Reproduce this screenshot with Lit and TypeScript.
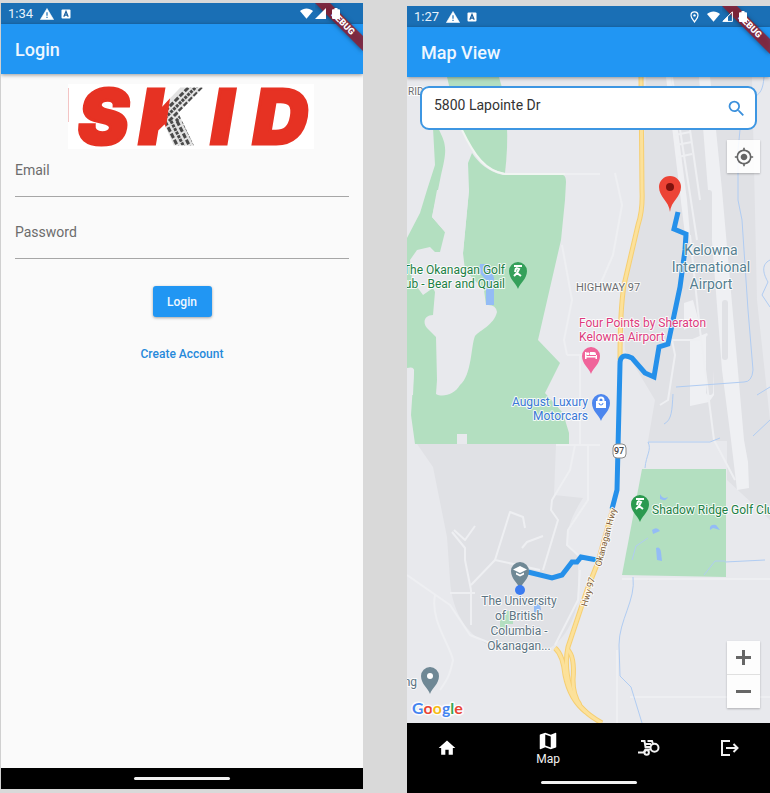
import { LitElement, html, css, svg, nothing } from "lit";
import { customElement, property } from "lit/decorators.js";

/* ---------- shared icon shapes ---------- */

const PIN = "M0 18C-2 12-9 8-9 0A9 9 0 0 1 9 0C9 8 2 12 0 18Z";
const GOLFER = "M-4-5H4M-2-3L1-2L-1 2L3 5M-2-3L-3 1M-1 2L-4 5";

@customElement("status-bar")
export class StatusBar extends LitElement {
  @property() time = "";
  @property({ type: Boolean }) located = false;

  static styles = css`
    :host {
      display: flex;
      align-items: center;
      height: 21px;
      padding: 0 23px 0 7px;
      background: #1a6fb5;
      color: #e8f2fb;
      font: 13px/21px Roboto, "Liberation Sans", sans-serif;
    }
    .warn { margin-left: 7px; }
    .box { margin-left: 7px; }
    .icons {
      position: relative;
      z-index: 4;
      display: flex;
      align-items: center;
      margin-left: auto;
    }
    .pin { margin-right: 8px; }
    .cell { margin-left: 2px; }
    .battery { margin-left: 6px; }
    svg { display: block; fill: #fff; }
  `;

  render() {
    return html`
      <span>${this.time}</span>
      <svg class="warn" width="14" height="12" viewBox="0 0 14 12">
        <path d="M7 0.5L13.6 11.6H0.4Z" stroke="#fff" stroke-linejoin="round" stroke-width=".6" />
        <path d="M6.4 4.2h1.2v3.6H6.4zM6.4 8.8h1.2V10H6.4z" fill="#1a6fb5" />
      </svg>
      <svg class="box" width="10" height="10" viewBox="0 0 10 10">
        <rect x=".5" y=".5" width="9" height="9" rx="1" />
        <path d="M2.8 7.8L5 2.4L7.2 7.8M3.6 6.1h2.8" fill="none" stroke="#1a5f9e" stroke-width="1.2" />
      </svg>
      <div class="icons">
        ${this.located
          ? html`<svg class="pin" width="9" height="12" viewBox="0 0 9 12">
              <path d="M4.5 11C3 8.600 1 6.600 1 4.400a3.500 3.500 0 0 1 7 0C8 6.600 6 8.600 4.500 11Z" fill="none" stroke="#fff" stroke-width="1.200" />
              <circle cx="4.500" cy="4.400" r="1.200" />
            </svg>`
          : nothing}
        <svg width="13" height="11" viewBox="0 0 13 11">
          <path d="M6.500 10.800L0 3C3.600-.4 9.400-.4 13 3Z" />
        </svg>
        <svg class="cell" width="11" height="11" viewBox="0 0 11 11">
          ${this.located
            ? svg`<path d="M10.400 .8V10.400H.9Z" fill="none" stroke="#fff" /><path d="M6 5V10.500H.6Z" />`
            : svg`<path d="M11 0V11H0Z" />`}
        </svg>
        <svg class="battery" width="8" height="11" viewBox="0 0 8 11">
          <path d="M2.500 0h3v1.200H7a1 1 0 0 1 1 1V10a1 1 0 0 1-1 1H1a1 1 0 0 1-1-1V2.200a1 1 0 0 1 1-1h1.500z" />
        </svg>
      </div>
    `;
  }
}

@customElement("debug-ribbon")
export class DebugRibbon extends LitElement {
  static styles = css`
    :host {
      position: absolute;
      top: 0;
      right: 0;
      z-index: 3;
      pointer-events: none;
    }
    svg { display: block; }
    text {
      font: 900 9px Roboto, "Liberation Sans", sans-serif;
      fill: #fff;
      text-anchor: middle;
    }
    .band {
      fill: rgb(150, 28, 42);
      fill-opacity: 0.8;
      filter: drop-shadow(0 1px 2px rgba(0, 0, 0, 0.5));
    }
  `;
  render() {
    return html`<svg width="48" height="52" viewBox="0 0 48 52">
      <path class="band" d="M0 0H15L48 33V48Z" />
      <text transform="translate(28 20) rotate(45)" y="3">DEBUG</text>
    </svg>`;
  }
}

@customElement("skid-logo")
export class SkidLogo extends LitElement {
  static styles = css`
    :host { display: block; width: 246px; background: #fff; }
    svg { display: block; width: 100%; height: auto; overflow: visible; }
    text { font: italic 900 76px Inter, "Liberation Sans", sans-serif; }
    .red { fill: #e63223; stroke: #e63223; stroke-width: 3; }
    .tread { fill: url(#tread); stroke: url(#tread); stroke-width: 3; }
    .groove { stroke: #4a4a4a; stroke-width: 3; fill: none; }
  `;
  render() {
    return html`<svg viewBox="0 0 246 65" role="img" aria-label="SKID">
      <defs>
        <pattern id="tread" patternUnits="userSpaceOnUse" x="69" y="0" width="90" height="65">
          <rect width="90" height="65" fill="#e2e2e2" />
          ${[0, 1, 2, 3, 4, 5].map(
            (i) => svg`<path class="groove" stroke-dasharray=${i % 2 ? "3 1" : "5 2"} d="M${18 + i * 7} 37L${54 + i * 7} 1" />
              <path class="groove" stroke-dasharray=${i % 2 ? "5 2" : "3 1"} d="M${22 + i * 6} 37L${36 + i * 6} 65" />`
          )}
          <path d="M0 0H35L26 65H0Z" fill="#e63223" />
        </pattern>
      </defs>
      <path d="M.5 4V38" stroke="#f3c4c4" />
      <text class="red" x="10" y="60">S</text>
      <text class="tread" x="71" y="60">K</text>
      <text class="red" x="143" y="60">I</text>
      <text class="red" x="185" y="60">D</text>
    </svg>`;
  }
}

/* ---------- map ---------- */

const DARKER = [
  "M417 444H556L554 495L583 498C572 515 566 530 567 545L578 557V600C574 625 560 645 545 650H500C470 640 452 615 450 580L447 537L433 467Z",
  "M646 77H752L757 300L770 420V520L727 480V441H648L655 400L625 350L622 300L642 215Z",
];

const GREENS = [
  "M447 77H499C508 105 509 140 505 173C485 170 474 155 462 130L455 110Z",
  "M433 128H438C447 145 447 150 441 175L438 190L432 217L445 232V444H415L411 415L414 370L407 368V238L420 213L427 190L435 165Z",
  "M472 153C478 162 488 172 503 175L563 175Q566 176 566 182L565 200L561 240L538 340L560 363L545 393L563 413L569 433V444H436V240L463 253L469 190L468 163Z",
  "M642 469H726V577L622 575Z",
];

const CLEARINGS = [
  "M437 190L432 217L445 232L440 252H435L430 247L417 250L410 260L412 280L423 295L433 288L435 292L433 315C425 315 422 322 427 328L436 337L437 380L436 394C443 398 455 394 460 385C472 375 471 345 475 336C480 330 494 325 497 312Q496 304 486 305L484 290L465 270L463 253L469 190Z",
  "M407 368Q415 366 414 372L413 395H407Z",
  "M457 434H467V444H457Z",
];

const RUNWAYS = [
  "M666 77H671L687 200L690 235H685Z",
  "M699 77H710L716 130L722 190L737 360L744 440L748 462L749 488L737 490L731 440L722 370L710 215Z",
  "M690 340L707 333L712 345L714 395L709 402L690 406Z",
  "M684 303L693 300L699 322L684 330Z",
];

const MAIN_ROADS = ["M462 130C474 155 485 171 505 174H565"];

const THIN_ROADS = [
  "M565 174H600M562 245L572 300L564 340L567 355",
  "M615 173L622 205L613 255L600 285",
  "M567 355H592M580 355V445",
  "M575 445L570 470L552 500L551 510L558 520L543 570",
  "M556 445H600M588 445V500L568 530L567 545L578 555",
  "M454 530L465 540L475 526M452 532L465 548V560L471 590M471 585L495 560L540 570",
  "M471 590V625M495 560L510 512L523 517L525 528M522 548L527 542L543 536",
  "M407 575L450 605L470 635L500 647M435 595C430 620 450 645 453 660C450 675 447 680 440 690",
  "M450 593H475M555 645L578 600L580 570",
  "M617 650V723M630 697H770M622 579H770",
  "M690 235L700 330L714 440L735 480",
  "M672 77L697 240M690 130L700 200M675 135L690 132M676 145L692 142M678 157L692 154",
  "M660 405L668 400L675 355L672 340H700",
];

const STREAMS = [
  "M764 77C763 90 760 93 756 96M740 130L738 150V200L742 220L748 310L753 370Q752 382 744 382L676 387",
  "M673 394C672 410 672 420 664 424M648 442H710L720 438M648 442C652 450 646 455 645 468",
  "M770 260C760 265 764 275 768 282L762 295L770 307M757 395L770 387M770 420L753 436",
  "M633 577C636 600 619 620 619 645L620 676L631 687L642 723",
  "M725 561H715L704 575M725 562L765 560M632 560L636 546L648 538",
];

const PONDS = [
  "M480 264H489L494 278V305H486V280L479 272Z",
  "M660 494Q663 500 668 497Q666 502 660 499ZM652 530Q657 526 660 531L653 534ZM710 530Q709 524 716 525L720 530L713 528ZM656 548Q660 546 661 552L662 561L657 560Z",
  "M534 606L540 603L541 610L534 613Z",
];

const HIGHWAY = [
  "M641 77L642 190Q643 210 638 225L624 285Q620 310 620 360",
  "M613 508L598 562L587 590L568 647Q564 665 570 687T602 723",
  "M555 648Q563 655 565 675Q570 700 586 712",
  "M568 650Q575 657 573 680Q573 695 580 705",
];

const ROUTE = [
  "M678 212L674 229L686 234L685 250L680 287L668 344L659 347L654 377L645 373L632 358Q620 352 620 364L617 490L612 509",
  "M528 572L552 578L562 575L572 562H577L581 557L597 560",
];

interface Label {
  kind: string;
  x: number;
  y: number;
  step: number;
  lines: string[];
}

const LABELS: Label[] = [
  { kind: "area small", x: 408, y: 95, step: 0, lines: ["RIDGE"] },
  { kind: "golf end", x: 505, y: 274, step: 14, lines: ["The Okanagan Golf", "Club - Bear and Quail"] },
  { kind: "area", x: 576, y: 291, step: 0, lines: ["HIGHWAY 97"] },
  { kind: "airport mid", x: 711, y: 255, step: 17, lines: ["Kelowna", "International", "Airport"] },
  { kind: "hotel", x: 579, y: 327, step: 14, lines: ["Four Points by Sheraton", "Kelowna Airport"] },
  { kind: "shop end", x: 588, y: 406, step: 14, lines: ["August Luxury", "Motorcars"] },
  { kind: "golf", x: 652, y: 514, step: 0, lines: ["Shadow Ridge Golf Club"] },
  { kind: "school mid", x: 519, y: 605, step: 15, lines: ["The University", "of British", "Columbia -", "Okanagan..."] },
  { kind: "school end", x: 417, y: 686, step: 0, lines: ["Parking"] },
];

@customElement("route-map")
export class RouteMap extends LitElement {
  static styles = css`
    :host { position: absolute; inset: 0; overflow: hidden; }
    svg { display: block; width: 100%; height: 100%; background: #e8e9ed; }
    .dark { fill: #e0e1e5; }
    .green { fill: #b3dfc0; }
    .clear { fill: #e8e9ed; }
    .runway { fill: #eff0f3; }
    .pond { fill: #94bcf5; }
    .main, .road, .stream, .casing, .highway, .route { fill: none; stroke-linejoin: round; }
    .main { stroke: #f1f5f2; stroke-width: 2; }
    .road { stroke: #eeeff2; stroke-width: 2; }
    .stream { stroke: #b0ccf2; stroke-width: 1; }
    .casing { stroke: #f6cf72; stroke-width: 5; }
    .highway { stroke: #fce19a; stroke-width: 3; }
    .route { stroke: #2590ea; stroke-width: 5; stroke-linejoin: miter; }
    text {
      font: 12px Roboto, "Liberation Sans", sans-serif;
      paint-order: stroke;
      stroke: #fff;
      stroke-opacity: 0.85;
      stroke-width: 2px;
      stroke-linejoin: round;
    }
    .mid { text-anchor: middle; }
    .end { text-anchor: end; }
    .area { fill: #6b6d70; font-size: 11px; }
    .small { font-size: 10px; }
    .golf { fill: #1d8045; }
    .airport { fill: #557f90; font-size: 14px; }
    .hotel { fill: #dd3b7d; }
    .shop { fill: #3b78d6; }
    .school { fill: #5c7482; }
    .street { fill: #7c5b36; font-size: 9px; }
    .shield { fill: #444; font-size: 9px; font-weight: 500; stroke: none; }
    .brand { font: 700 16px Lato, "Liberation Sans", sans-serif; stroke-width: 3px; }
    .glyph { fill: none; stroke: #fff; stroke-width: 2; }
  `;

  private shapes(list: string[], kind: string) {
    return list.map((d) => svg`<path class=${kind} d=${d} />`);
  }

  render() {
    return html`<svg viewBox="407 77 363 646" preserveAspectRatio="xMidYMid slice" role="img" aria-label="Route map">
      ${this.shapes(DARKER, "dark")} ${this.shapes(GREENS, "green")}
      ${this.shapes(CLEARINGS, "clear")} ${this.shapes(RUNWAYS, "runway")}
      <path class="green" d="M500 615h6v-4h5v6h2v7h-7v6h-6z" />
      <g class="dark">
        <rect x="705" y="190" width="7" height="50" rx="3" />
        <rect x="706" y="335" width="7" height="60" rx="3" />
        <rect x="722" y="300" width="6" height="60" rx="3" />
      </g>
      ${this.shapes(THIN_ROADS, "road")} ${this.shapes(MAIN_ROADS, "main")}
      ${this.shapes(STREAMS, "stream")}
      ${this.shapes(PONDS, "pond")} ${this.shapes(HIGHWAY, "casing")}
      ${this.shapes(HIGHWAY, "highway")} ${this.shapes(ROUTE, "route")}

      ${LABELS.map(
        (l) => svg`<text class=${l.kind} y=${l.y}>${l.lines.map(
          (t, i) => svg`<tspan x=${l.x} y=${l.y + i * l.step}>${t}</tspan>`
        )}</text>`
      )}
      <text class="street" transform="translate(601 567) rotate(-75)">Okanagan Hwy</text>
      <text class="street" transform="translate(587 607) rotate(-74)">Hwy 97</text>

      <rect x="613" y="444" width="13" height="14" rx="4" fill="#fff" stroke="#8a8a8a" />
      <text class="shield mid" x="619" y="454">97</text>

      <g transform="translate(518 271)">
        <path d=${PIN} fill="#35a05a" />
        <path class="glyph" d=${GOLFER} />
      </g>
      <g transform="translate(640 504)">
        <path d=${PIN} fill="#2b9a4f" />
        <path class="glyph" d=${GOLFER} />
      </g>
      <g transform="translate(591 356)">
        <path d=${PIN} fill="#f0649a" />
        <path d="M-6-4h1.500v4H5V-2a2 2 0 0 0-2-2H-1v3h-1a1.500 1.500 0 1 0-2 0h10v4H4.500V1.500h-9V3H-6Z" fill="#fff" />
      </g>
      <g transform="translate(601 403)">
        <path d=${PIN} fill="#4c86ee" />
        <path d="M-5-2H5V5H-5Z" fill="#fff" />
        <path class="glyph" d="M-2.500-2V-3a2.500 2.500 0 0 1 5 0V-2" stroke-width="1.400" />
        <path d="M-2 0a2 2 0 0 0 4 0" fill="none" stroke="#4c86ee" />
      </g>
      <g transform="translate(520 571)">
        <path d=${PIN} fill="#6f8895" />
        <path d="M0-5L7-1.500L0 2L-7-1.500ZM-4 1.500L0 3.500L4 1.500V3.500L0 5.500L-4 3.500Z" fill="#fff" />
      </g>
      <circle cx="520" cy="590" r="5" fill="#3b7bf0" />
      <g transform="translate(430 676)">
        <path d=${PIN} fill="#6f8895" />
        <circle r="3" fill="#fff" />
      </g>
      <g transform="translate(670 187)">
        <path d="M0 25C-1 14-11 10-11 0A11 11 0 0 1 11 0C11 10 1 14 0 25Z" fill="#ec4335" />
        <circle r="4" fill="#7e120d" />
      </g>

      <text class="brand" x="412" y="714"><tspan fill="#4484f0">G</tspan><tspan fill="#e94436">o</tspan><tspan fill="#f6bb15">o</tspan><tspan fill="#4484f0">g</tspan><tspan fill="#35a653">l</tspan><tspan fill="#e94436">e</tspan></text>
    </svg>`;
  }
}

/* ---------- screens ---------- */

@customElement("app-root")
export class AppRoot extends LitElement {
  static styles = css`
    :host {
      display: grid;
      grid-template-columns: 1fr 1fr;
      column-gap: 44px;
      box-sizing: border-box;
      min-height: 100vh;
      background: #d9d9d9;
      font-family: Roboto, "Liberation Sans", sans-serif;
    }
    .phone {
      position: relative;
      display: flex;
      flex-direction: column;
      overflow: hidden;
      background: #fafafa;
    }
    .login { margin: 3px 0 4px; border-left: 1px solid #d0d0d0; }
    .mapview { margin-top: 6px; }
    .bar {
      position: relative;
      z-index: 2;
      height: 50px;
      padding: 0 14px;
      background: #2196f3;
      box-shadow: 0 1px 4px rgba(0, 0, 0, 0.4);
    }
    h1 {
      margin: 0;
      color: #eef7ff;
      font-size: 18px;
      font-weight: 500;
      line-height: 52px;
    }
    .form {
      display: flex;
      flex: 1;
      flex-direction: column;
      align-items: center;
      padding: 10px 14px 0;
    }
    skid-logo { margin-left: 18px; }
    .field { display: block; width: 100%; margin-top: 11px; }
    .field + .field { margin-top: 25px; }
    .field label {
      display: block;
      color: #6c6c6c;
      font-size: 14px;
      line-height: 20px;
    }
    .field input {
      display: block;
      box-sizing: border-box;
      width: 100%;
      height: 17px;
      padding: 0;
      border: 0;
      border-bottom: 1px solid #a6a6a6;
      outline: 0;
      background: none;
      font: 14px Roboto, sans-serif;
    }
    .submit {
      width: 59px;
      height: 31px;
      margin-top: 27px;
      padding: 0;
      border: 0;
      border-radius: 3px;
      background: #2196f3;
      box-shadow: 0 1px 3px rgba(0, 0, 0, 0.35);
      color: #f0f8ff;
      font: 500 12px Roboto, sans-serif;
    }
    .create {
      margin-top: 29px;
      color: #2689da;
      font-size: 12px;
      font-weight: 500;
      line-height: 16px;
      text-decoration: none;
    }
    .gesture {
      display: flex;
      align-items: center;
      justify-content: center;
      height: 21px;
      background: #000;
    }
    .gesture i { width: 96px; height: 3px; border-radius: 2px; background: #f2f2f2; }

    .canvas {
      position: relative;
      display: flex;
      flex: 1;
      flex-direction: column;
      padding: 9px 10px 15px;
    }
    .search, .tool, .zoom { position: relative; z-index: 1; }
    .search {
      display: flex;
      box-sizing: border-box;
      height: 44px;
      margin: 0 3px;
      border: 2px solid #3d96e2;
      border-radius: 9px;
      background: #fff;
    }
    .search input {
      flex: 1;
      min-width: 0;
      height: 34px;
      padding: 0 0 0 12px;
      border: 0;
      outline: 0;
      background: none;
      color: #333;
      font: 14px Roboto, sans-serif;
    }
    .search button { width: 38px; padding: 0; border: 0; background: none; }
    .search svg { fill: #3b90dc; }
    button svg { display: block; margin: 0 auto; }
    .tool, .zoom {
      align-self: flex-end;
      background: rgba(255, 255, 255, 0.88);
      box-shadow: 0 1px 2px rgba(0, 0, 0, 0.25);
    }
    .tool { width: 33px; height: 33px; margin-top: 10px; padding: 0; border: 0; fill: #666; }
    .zoom { margin-top: auto; }
    .zoom button {
      display: block;
      width: 33px;
      height: 33px;
      padding: 0;
      border: 0;
      background: none;
      fill: #666;
    }
    .zoom button + button { height: 34px; border-top: 1px solid #e0e0e0; }

    .tabs { display: flex; height: 49px; background: #000; }
    .tabs a {
      display: flex;
      flex: 2;
      flex-direction: column;
      align-items: center;
      justify-content: center;
      color: #f2f2f2;
      font-size: 12px;
      line-height: 14px;
      text-decoration: none;
      fill: #fff;
    }
    .tabs .active { flex: 3; }
    .tabs svg { display: block; }
    .line { fill: none; stroke: #f2f2f2; stroke-width: 2; }
  `;

  render() {
    return html`
      <section class="phone login">
        <status-bar time="1:34"></status-bar>
        <debug-ribbon></debug-ribbon>
        <header class="bar"><h1>Login</h1></header>
        <form class="form">
          <skid-logo></skid-logo>
          <div class="field">
            <label for="email">Email</label>
            <input id="email" type="email" />
          </div>
          <div class="field">
            <label for="password">Password</label>
            <input id="password" type="password" />
          </div>
          <button class="submit" type="button">Login</button>
          <a class="create" href="#create">Create Account</a>
        </form>
        <div class="gesture"><i></i></div>
      </section>

      <section class="phone mapview">
        <status-bar time="1:27" located></status-bar>
        <debug-ribbon></debug-ribbon>
        <header class="bar"><h1>Map View</h1></header>
        <main class="canvas">
          <route-map></route-map>
          <div class="search">
            <input type="text" aria-label="Destination" value="5800 Lapointe Dr" />
            <button type="button" aria-label="Search">
              <svg width="21" height="21" viewBox="0 0 24 24">
                <path d="M15.500 14h-.79l-.28-.27A6.470 6.470 0 0 0 16 9.500 6.500 6.500 0 1 0 9.500 16c1.610 0 3.090-.59 4.230-1.570l.27.28v.79l5 4.990L20.490 19l-4.990-5zm-6 0C7.010 14 5 11.990 5 9.500S7.010 5 9.500 5 14 7.010 14 9.500 11.990 14 9.500 14z" />
              </svg>
            </button>
          </div>
          <button class="tool" type="button" aria-label="My location">
            <svg width="20" height="20" viewBox="0 0 24 24">
              <path d="M12 8c-2.210 0-4 1.790-4 4s1.790 4 4 4 4-1.790 4-4-1.790-4-4-4zm8.940 3A8.994 8.994 0 0 0 13 3.060V1h-2v2.060A8.994 8.994 0 0 0 3.060 11H1v2h2.060A8.994 8.994 0 0 0 11 20.940V23h2v-2.060A8.994 8.994 0 0 0 20.940 13H23v-2h-2.060zM12 19c-3.870 0-7-3.130-7-7s3.130-7 7-7 7 3.130 7 7-3.130 7-7 7z" />
            </svg>
          </button>
          <div class="zoom">
            <button type="button" aria-label="Zoom in">
              <svg width="15" height="15" viewBox="0 0 15 15"><path d="M6 0h3v6h6v3H9v6H6V9H0V6h6z" /></svg>
            </button>
            <button type="button" aria-label="Zoom out">
              <svg width="15" height="15" viewBox="0 0 15 15"><path d="M0 6h15v3H0z" /></svg>
            </button>
          </div>
        </main>
        <nav class="tabs">
          <a href="#home" aria-label="Home">
            <svg width="20" height="20" viewBox="0 0 24 24"><path d="M10 20v-6h4v6h5v-8h3L12 3 2 12h3v8z" /></svg>
          </a>
          <a class="active" href="#map">
            <svg width="22" height="22" viewBox="0 0 24 24">
              <path d="M20.500 3l-.16.03L15 5.100 9 3 3.360 4.900c-.21.07-.36.25-.36.48V20.500c0 .28.22.5.5.5l.16-.03L9 18.900l6 2.100 5.640-1.900c.21-.07.36-.25.36-.48V3.500c0-.28-.22-.5-.5-.5zM15 19l-6-2.110V5l6 2.110V19z" />
            </svg>
            Map
          </a>
          <a href="#rides" aria-label="Mobility">
            <svg width="22" height="18" viewBox="0 0 22 18">
              <g class="line">
                <circle cx="16.500" cy="8.800" r="4" />
                <circle cx="8.700" cy="13.500" r="2.200" />
                <path d="M3 2H6.500L7.500 8H12.500M9.500 2H14L15 5M7 5H13M0 13.600H6M6 13L7.500 10.400H12" />
              </g>
            </svg>
          </a>
          <a href="#logout" aria-label="Log out">
            <svg width="18" height="16" viewBox="0 0 18 16">
              <path class="line" d="M9 1H1V15H9M5 8H16M12.500 4L16.500 8L12.500 12" />
            </svg>
          </a>
        </nav>
        <div class="gesture"><i></i></div>
      </section>
    `;
  }
}
